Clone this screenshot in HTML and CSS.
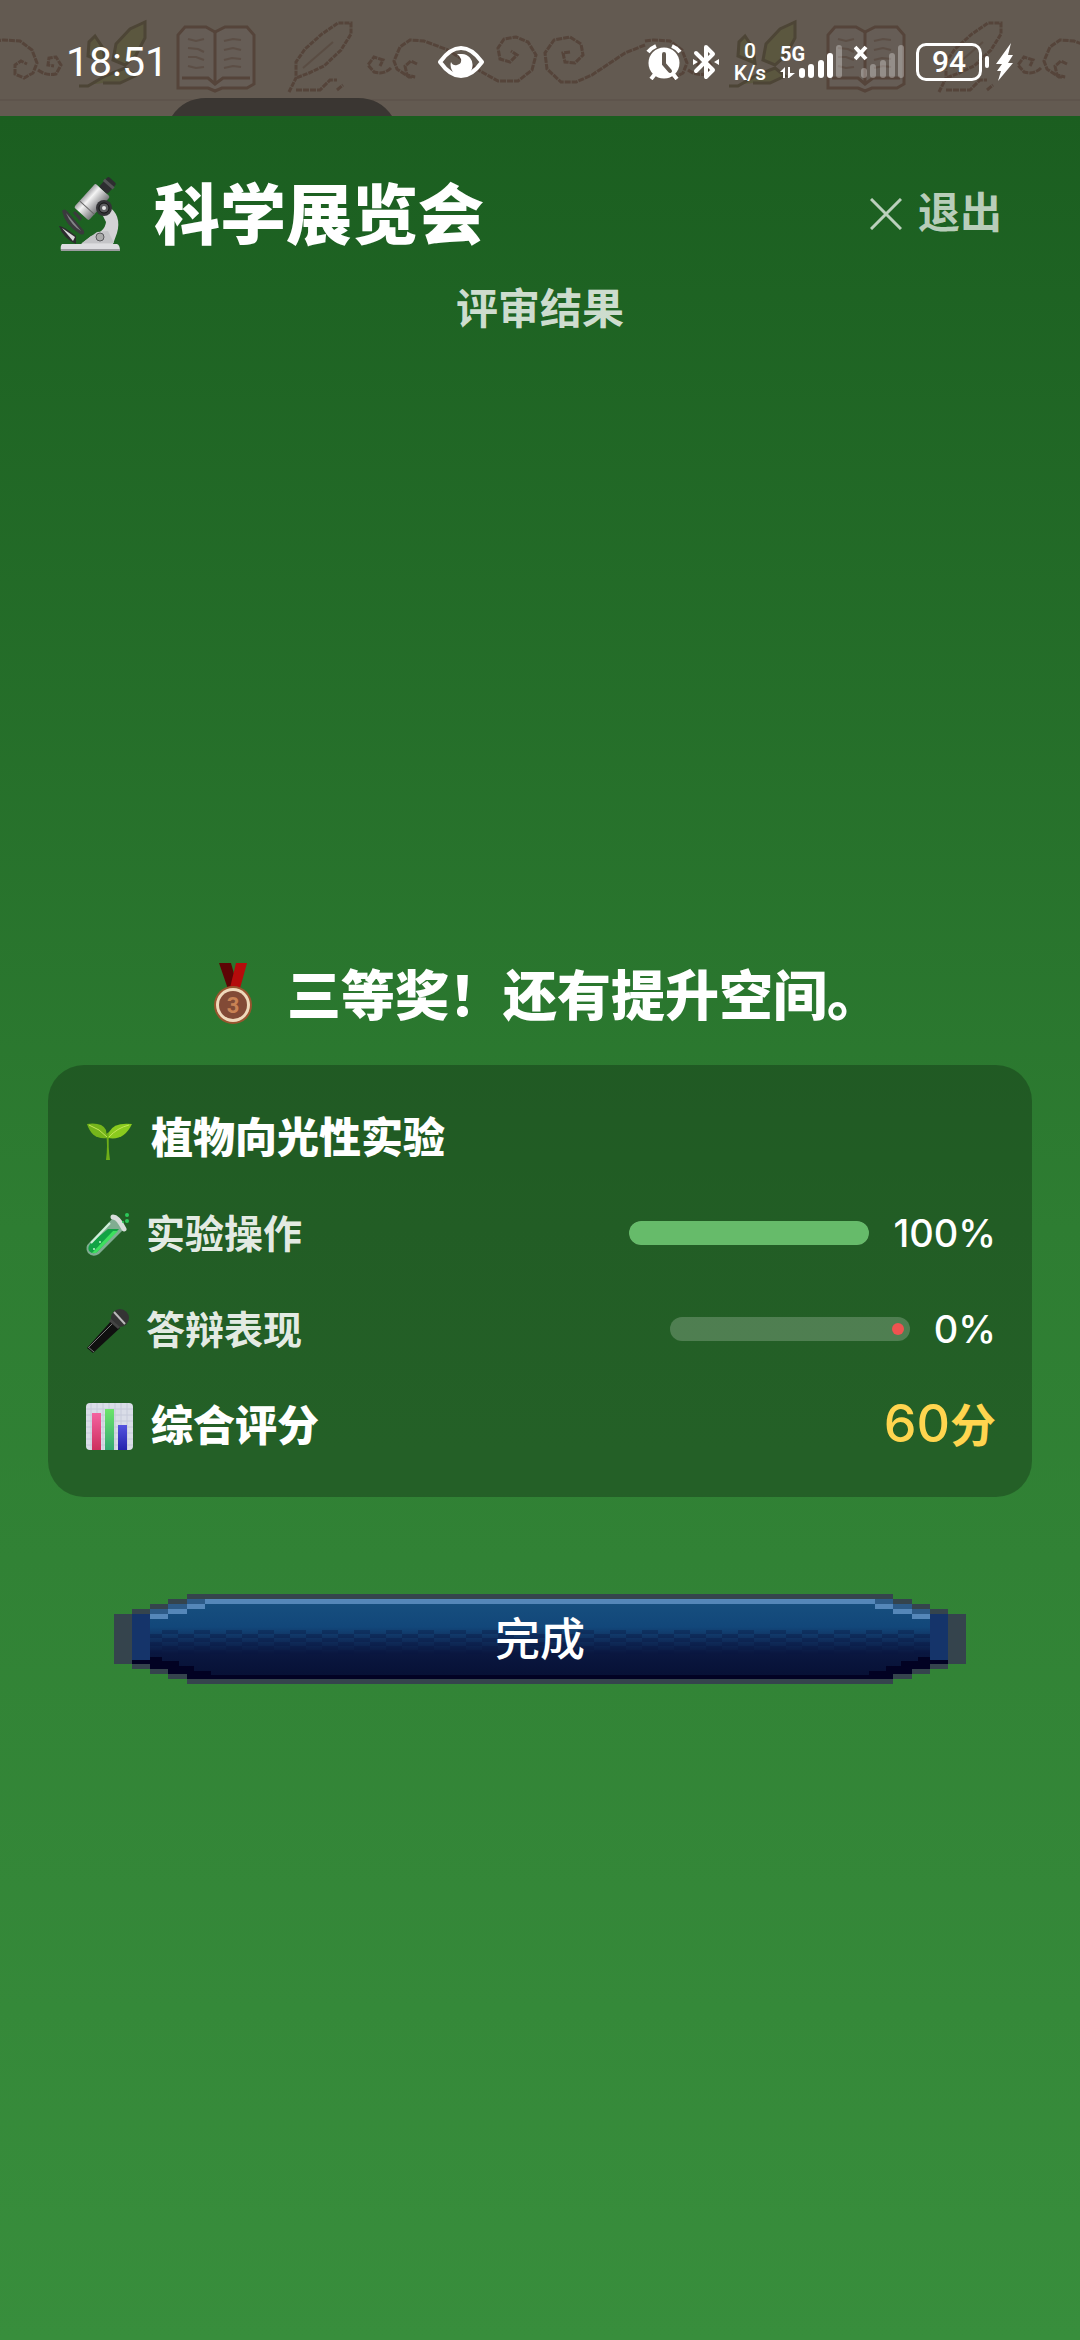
FILE: index.html
```html
<!DOCTYPE html>
<html lang="zh-CN">
<head>
  <meta charset="UTF-8" />
  <meta name="viewport" content="width=device-width, initial-scale=1" />
  <title>科学展览会</title>
  <link rel="stylesheet" href="styles.css">
</head>
<body>
  <div class="status-bar">
    <!-- Parchment border behind the status icons -->
    <svg class="parchment" width="1080" height="116" viewBox="0 0 1080 116" aria-hidden="true">
      <defs>
        <g id="motif" fill="none" stroke="#55443a" stroke-width="3">
          <!-- scroll left of the leaf -->
          <path d="M-5 41 L3 40 L20 41 L32 50 L37 63 L33 73 L24 78 L15 74 L15 65 L21 61 L27 64" stroke-dasharray="6 1" />
          <path d="M38 70 Q46 76 56 74 L61 65 L56 57 L49 58 L48 65 L54 66" stroke-dasharray="6 1" />
          <!-- leaf -->
          <g stroke="#4d4536" fill="#5b573f">
            <path d="M113 60 L116 44 L130 29 L145 22 V38 L136 55 L125 65 Z" />
            <path d="M88 56 L89 42 L95 36 L103 48 L105 63 Z" />
            <path d="M79 86 H88 L105 76 L125 68 L135 76 L120 83 H103" />
          </g>
          <!-- book -->
          <path d="M178 84 V35 L185 27 H206 L215 32 L225 27 H247 L254 35 V84 L247 88 H222 L215 91 L208 88 H178 Z" fill="#665d56" />
          <path d="M182 78 H208 L215 84 L223 78 H250 M215 32 V82" />
          <path d="M188 39 l8 2 8-2 M188 48 l10 1 6 3 M188 57 h8 l8 3 M188 66 l8 2 8-1 M224 41 l9-2 8 1 M224 50 l9-2 8 2 M224 60 l8-2 9 1 M224 68 l9-2 8 1" stroke-width="2" opacity=".6" />
          <!-- quill -->
          <path d="M289 92 L296 78 V62 L305 49 L322 34 L338 23 H351 V34 L341 50 L324 66 L309 73 L296 78" stroke-dasharray="5 1" />
          <path d="M303 68 L333 42" stroke-width="2" opacity=".6" />
          <path d="M296 90 H320 L330 80 H337 M337 90 L343 85" stroke-dasharray="6 1" />
          <!-- small curls and the large spiral -->
          <path d="M391 68 Q384 75 374 72 L368 65 L374 57 L383 60 L380 66" stroke-dasharray="6 1" />
          <path d="M417 64 L411 61 L405 66 L407 75 L415 77 L409 77 L397 69 L394 61 L400 47 L410 40 L424 41 L448 50 L480 71 L498 81 H518 L532 70 L536 55 L528 42 L516 37 L504 39 L498 48 L500 59 L510 62 L517 55 L511 51" stroke-dasharray="6 1" />
        </g>
      </defs>
      <rect x="0" y="99" width="1080" height="2" fill="#5e544c" />
      <use href="#motif" />
      <use href="#motif" x="650" />
      <path d="M645 45 L625 53 L592 75 L576 82 H561 L547 69 L545 53 L554 40 L570 37 L581 44 L583 55 L575 63 L565 62 L563 53 L570 52" fill="none" stroke="#55443a" stroke-width="3" stroke-dasharray="6 1" />
      <path d="M172 116 Q184 98 206 98 H358 Q380 98 392 116 Z" fill="#3a3632" />
    </svg>

    <div class="clock">18:51</div>
    <svg class="eye" width="46" height="32" viewBox="0 0 46 32" aria-hidden="true">
      <path d="M2 16 Q12 2 23 2 Q34 2 44 16 Q34 30 23 30 Q12 30 2 16 Z" fill="none" stroke="#fff" stroke-width="4" stroke-linejoin="round" />
      <path d="M24 8 A11 11 0 1 1 13 16 Q15 20 19 19 Q24 18 23 13 Q22 10 19 8 Z" fill="#fff" />
    </svg>

    <div class="status-icons">
      <svg width="36" height="36" viewBox="0 0 36 36" aria-hidden="true">
        <circle cx="18" cy="19" r="15.500" fill="#fff" />
        <path d="M2 8 Q5 4 10 2 M26 2 Q31 4 34 8" fill="none" stroke="#fff" stroke-width="4" />
        <path d="M9 30 L5 35 M27 30 L31 35" stroke="#fff" stroke-width="4" />
        <path d="M18 10 V20 L24 27" fill="none" stroke="#635a51" stroke-width="4" stroke-linecap="round" />
      </svg>
      <svg class="bluetooth" width="26" height="36" viewBox="0 0 26 36" aria-hidden="true">
        <path d="M3 9 L20 26 L13 33 V3 L20 10 L3 27" fill="none" stroke="#fff" stroke-width="4" stroke-linejoin="round" stroke-linecap="round" />
        <path d="M0 15 L5 18 L0 21 Z M26 15 L21 18 L26 21 Z" fill="#fff" />
      </svg>
      <div class="net-speed"><span>0</span><span>K/s</span></div>
      <div class="signal">
        <span class="signal-label">5G</span>
        <svg width="64" height="36" viewBox="0 0 64 36" fill="#fff" aria-hidden="true">
          <path d="M0 28 L5 23 V34 H3 V28 Z M8 23 H10 V29 L15 29 L9 34 H8 Z" />
          <rect x="19" y="24" width="6" height="10" rx="3" />
          <rect x="28" y="20" width="6" height="14" rx="3" />
          <rect x="38" y="16" width="6" height="18" rx="3" />
          <rect x="47" y="9" width="6" height="25" rx="3" />
          <rect x="56" y="1" width="6" height="33" rx="3" opacity=".3" />
        </svg>
      </div>
      <svg class="no-sim" width="50" height="36" viewBox="0 0 50 36" aria-hidden="true">
        <path d="M1 3 L12 15 M12 3 L1 15" stroke="#fff" stroke-width="4" />
        <g fill="#fff" opacity=".3">
          <rect x="7" y="24" width="6" height="10" rx="3" />
          <rect x="16" y="20" width="6" height="14" rx="3" />
          <rect x="26" y="16" width="6" height="18" rx="3" />
          <rect x="35" y="9" width="6" height="25" rx="3" />
          <rect x="44" y="1" width="6" height="33" rx="3" />
        </g>
      </svg>
      <div class="battery">94</div>
      <svg class="bolt" width="18" height="38" viewBox="0 0 18 38" aria-hidden="true">
        <path d="M15 0 L0 21 H6 L1 28 H5 L2 38 L17 20 H12 L17 12 H12 Z" fill="#fff" />
      </svg>
    </div>
  </div>

  <div class="screen">
    <header class="header">
      <h1>
        <svg class="title-icon" viewBox="0 0 66 76" aria-hidden="true">
          <defs>
            <linearGradient id="metal" x1="0" y1="0" x2="1" y2="0">
              <stop offset="0" stop-color="#a2a2a5" />
              <stop offset=".3" stop-color="#f4f4f4" />
              <stop offset="1" stop-color="#77777a" />
            </linearGradient>
          </defs>
          <path d="M50 29 Q64 38 59 56 L55 67 H23 L33 59 Q47 55 48 45 L43 35 Z" fill="#d3d3d5" />
          <path d="M24 66 L39 55 L50 54 L56 66 Z" fill="#c4c4c7" />
          <circle cx="42" cy="60" r="4" fill="#aaa" stroke="#59595c" stroke-width="1" />
          <path d="M4 67 H59 Q62 68 62 74 H3 Q2 69 4 67 Z" fill="#dddde0" />
          <path d="M3 72 H62 V74 H3 Z" fill="#9c9ca0" />
          <path d="M4 34 Q6 31 9 34 L26 54 Q27 59 22 57 Q7 48 4 34 Z" fill="#3a3a3d" />
          <path d="M8 36 L23 54 Q13 48 8 36 Z" fill="#858589" />
          <path d="M1 49 Q4 48 18 59 L18 67 Q5 61 1 49 Z" fill="#2c2c2e" />
          <path d="M4 51 L17 60 L15 64 Z" fill="#d8d8da" />
          <path d="M17 34 L24 41 L22 44 L15 36 Z" fill="#3b3b3d" />
          <g transform="rotate(42 34 25)">
            <rect x="24" y="9" width="20" height="32" rx="2" fill="url(#metal)" />
            <rect x="24" y="32" width="20" height="1" fill="#666" />
            <rect x="29" y="-5" width="11" height="14" rx="2" fill="#2d2d30" />
            <rect x="28" y="-1" width="13" height="3" fill="#555558" />
          </g>
          <circle cx="46" cy="31" r="8" fill="#343437" />
          <circle cx="46" cy="31" r="5" fill="#5e5e61" stroke="#111" stroke-width="1" />
          <circle cx="46" cy="31" r="2" fill="#e8e8e8" />
        </svg>
        科学展览会
      </h1>
      <button class="exit" type="button">
        <svg width="32" height="32" viewBox="0 0 32 32" aria-hidden="true">
          <path d="M1 1 L31 31 M31 1 L1 31" stroke="currentColor" stroke-width="3" />
        </svg>
        退出
      </button>
    </header>
    <p class="subtitle">评审结果</p>

    <main class="result">
      <h2 class="award">
        <svg class="medal" viewBox="0 0 68 68" aria-hidden="true">
          <path d="M20 2 H32 L40 31 H30 Z" fill="#5d0505" />
          <path d="M37 2 H48 L40 31 H30 Z" fill="#b50b0b" />
          <path d="M27 27 H41 L43 32 H25 Z" fill="#b77843" />
          <circle cx="34" cy="44" r="19" fill="#98552f" />
          <circle cx="34" cy="44" r="17" fill="#efd9bb" />
          <circle cx="34" cy="44" r="14" fill="#824a36" />
          <text class="medal-number" x="34" y="52" text-anchor="middle">3</text>
        </svg>
        三等奖！还有提升空间。
      </h2>

      <section class="card">
        <div class="row row-strong">
          <span class="label">
            <svg viewBox="0 0 47 47" aria-hidden="true">
              <path d="M20 45 Q22 30 20 19 L23 17 Q22 32 24 45 Z" fill="#6fae18" />
              <path d="M1 9 Q16 7 20 15 L21 23 Q6 25 1 9 Z" fill="#75b51b" />
              <path d="M46 9 Q28 7 23 17 L22 23 Q38 26 46 9 Z" fill="#8acb1e" />
              <path d="M3 10 Q14 14 21 22 M43 10 Q31 13 23 22" fill="none" stroke="#c4e658" stroke-width="1" />
            </svg>
            植物向光性实验
          </span>
        </div>

        <div class="row">
          <span class="label" id="operation">
            <svg viewBox="0 0 44 44" aria-hidden="true">
              <path d="M27 5 L38 16 L13 41 Q7 45 2 40 Q-2 34 4 29 Z" fill="#80ad91" />
              <path d="M22 16 H33 L11 39 Q7 42 3 38 Q1 34 5 30 Z" fill="#12a345" />
              <path d="M32 18 L10 40 L6 40 L27 18 Z" fill="#3de05e" />
              <path d="M27 4 Q32 4 38 16" fill="none" stroke="#d8dedb" stroke-width="5" stroke-linecap="round" />
              <path d="M24 10 L5 30" stroke="#d2f0da" stroke-width="2" />
              <circle cx="41" cy="2" r="2" fill="#2cc95a" />
              <circle cx="41" cy="8" r="2" fill="#2cc95a" />
              <circle cx="37" cy="9" r="1" fill="#2cc95a" />
              <circle cx="14" cy="29" r="1" fill="#bdf5c9" />
              <circle cx="8" cy="36" r="1" fill="#bdf5c9" />
            </svg>
            实验操作
          </span>
          <div class="score">
            <div class="bar" role="progressbar" aria-labelledby="operation" aria-valuenow="100">
              <div class="bar-fill" style="width: 100%"></div>
            </div>
            <span>100%</span>
          </div>
        </div>

        <div class="row">
          <span class="label" id="defense">
            <svg viewBox="0 0 44 44" aria-hidden="true">
              <path d="M26 11 L34 19 L7 44 L1 39 Z" fill="#101010" />
              <path d="M27 14 L3 38" stroke="#777" stroke-width="1" />
              <circle cx="34" cy="9" r="9" fill="#343434" />
              <path d="M28 3 L39 15" stroke="#bbb" stroke-width="2" />
              <path d="M24 11 L33 19" stroke="#444" stroke-width="3" />
              <path d="M2 38 L8 43" stroke="#777" stroke-width="1" />
            </svg>
            答辩表现
          </span>
          <div class="score">
            <div class="bar bar-empty" role="progressbar" aria-labelledby="defense" aria-valuenow="0"></div>
            <span>0%</span>
          </div>
        </div>

        <div class="row row-strong">
          <span class="label">
            <svg viewBox="0 0 47 47" aria-hidden="true">
              <defs>
                <linearGradient id="pink" x2="0" y2="1"><stop stop-color="#f463a0" /><stop offset="1" stop-color="#cd2e5d" /></linearGradient>
                <linearGradient id="green" x2="0" y2="1"><stop stop-color="#6de56b" /><stop offset="1" stop-color="#34a873" /></linearGradient>
                <linearGradient id="blue" x2="0" y2="1"><stop stop-color="#5553df" /><stop offset="1" stop-color="#2423ad" /></linearGradient>
              </defs>
              <rect width="47" height="47" rx="4" fill="#dadde8" />
              <path d="M0 6 H47 M0 12 H47 M0 18 H47 M0 24 H47 M0 30 H47 M0 36 H47 M0 42 H47 M5 0 V47 M11 0 V47 M17 0 V47 M23 0 V47 M29 0 V47 M35 0 V47 M41 0 V47" stroke="#c6cada" stroke-width="1" />
              <rect x="6" y="10" width="9" height="37" fill="url(#pink)" />
              <rect x="19" y="6" width="9" height="41" fill="url(#green)" />
              <rect x="32" y="22" width="9" height="25" fill="url(#blue)" />
            </svg>
            综合评分
          </span>
          <span class="total"><span class="total-number">60</span>分</span>
        </div>
      </section>

      <button class="done" type="button">
        <svg class="done-frame" viewBox="0 0 852 90" preserveAspectRatio="none" shape-rendering="crispEdges" aria-hidden="true">
          <defs>
            <linearGradient id="navy" x2="0" y2="1">
              <stop offset="0" stop-color="#17507f" />
              <stop offset=".35" stop-color="#12477a" />
              <stop offset=".5" stop-color="#10305f" />
              <stop offset=".68" stop-color="#0a1740" />
              <stop offset="1" stop-color="#071034" />
            </linearGradient>
            <pattern id="dither" width="32" height="8" patternUnits="userSpaceOnUse">
              <rect width="16" height="4" fill="#081540" />
              <rect x="16" y="4" width="16" height="4" fill="#081540" />
            </pattern>
          </defs>
          <path d="M0 20 H18 V15 H36 V10 H54 V5 H73 V0 H779 V5 H798 V10 H816 V15 H834 V20 H852 V70 H834 V75 H816 V80 H798 V85 H779 V90 H73 V85 H54 V80 H36 V75 H18 V70 H0 Z" fill="#35444d" />
          <path d="M18 20 H36 V70 H18 Z M816 20 H834 V70 H816 Z" fill="#15346a" />
          <path d="M36 15 H54 V10 H73 V5 H779 V10 H798 V15 H816 V75 H798 V80 H779 V85 H73 V80 H54 V75 H36 Z" fill="url(#navy)" />
          <path d="M36 36 H816 V60 H36 Z" fill="url(#dither)" opacity=".35" />
          <path d="M91 5 H761 V10 H91 Z M73 10 H91 V15 H73 Z M54 15 H73 V20 H54 Z M36 20 H54 V25 H36 Z M761 10 H779 V15 H761 Z M779 15 H798 V20 H779 Z M798 20 H816 V25 H798 Z" fill="#5587b9" />
          <path d="M73 5 H91 V10 H73 Z M54 10 H73 V15 H54 Z M36 15 H54 V20 H36 Z M761 5 H779 V10 H761 Z M779 10 H798 V15 H779 Z M798 15 H816 V20 H798 Z" fill="#2d5b88" />
          <path d="M18 66 H36 V63 H48 V67 H65 V72 H80 V77 H97 V81 H755 V77 H772 V72 H787 V67 H804 V63 H816 V66 H834 V70 H816 V75 H798 V80 H779 V85 H73 V80 H54 V75 H36 V70 H18 Z" fill="#020223" />
        </svg>
        <span>完成</span>
      </button>
    </main>
  </div>
</body>
</html>
```

FILE: styles.css
```css
* {
  box-sizing: border-box;
}
body {
  margin: 0;
  min-height: 100vh;
  display: flex;
  flex-direction: column;
  font-family: "Noto Sans CJK SC", sans-serif;
  color: #fff;
  background: #388e3c;
}
h1, h2, p {
  margin: 0;
}
svg {
  display: block;
  flex: none;
}
button {
  border: none;
  padding: 0;
  background: none;
  font-family: inherit;
  cursor: pointer;
}

/* status bar */
.status-bar {
  position: relative;
  height: 116px;
  padding: 8px 66px 0;
  display: flex;
  align-items: center;
  overflow: hidden;
  background: #635a51;
  font-family: Roboto, sans-serif;
}
.parchment {
  position: absolute;
  left: 0;
  top: 0;
}
.clock, .eye, .status-icons {
  position: relative;
}
.clock {
  font-size: 41px;
  line-height: 48px;
}
.eye {
  margin-left: auto;
  margin-right: 162px;
}
.status-icons {
  display: flex;
  align-items: center;
}
.bluetooth {
  margin-left: 11px;
}
.net-speed {
  width: 36px;
  margin-left: 13px;
  display: flex;
  flex-direction: column;
  align-items: center;
  font-size: 21px;
  line-height: 22px;
  font-weight: 500;
}
.signal {
  position: relative;
  margin-left: 12px;
}
.signal-label {
  position: absolute;
  left: 0;
  top: 0;
  font-size: 20px;
  line-height: 20px;
  font-weight: 700;
}
.no-sim {
  margin-left: 10px;
}
.battery {
  position: relative;
  width: 66px;
  height: 38px;
  margin-left: 12px;
  border: 3px solid #fff;
  border-radius: 10px;
  font-size: 30px;
  line-height: 32px;
  font-weight: 500;
  text-align: center;
}
.battery::after {
  content: "";
  position: absolute;
  right: -10px;
  top: 10px;
  width: 4px;
  height: 12px;
  border-radius: 2px;
  background: #fff;
}
.bolt {
  margin-left: 14px;
}

/* screen */
.screen {
  flex: 1;
  display: flex;
  flex-direction: column;
  padding: 48px 48px 32px;
  background: linear-gradient(#1b5e20, #2e7d32 50%, #388e3c);
}
.header {
  display: flex;
  justify-content: space-between;
  align-items: center;
  padding: 0 30px 4px 10px;
}
.header h1 {
  display: flex;
  align-items: center;
  gap: 30px;
  font-size: 66px;
  line-height: 92px;
  font-weight: 900;
}
.title-icon {
  width: 66px;
  height: 76px;
  margin-top: 10px;
}
.exit {
  display: flex;
  align-items: center;
  gap: 16px;
  color: rgba(255, 255, 255, 0.7);
  font-size: 42px;
  line-height: 48px;
  font-weight: 700;
}
.exit svg {
  margin-top: 8px;
}
.subtitle {
  margin-top: 22px;
  padding-bottom: 2px;
  text-align: center;
  color: rgba(255, 255, 255, 0.8);
  font-size: 42px;
  line-height: 48px;
  font-weight: 700;
}

.result {
  flex: 1;
  display: flex;
  flex-direction: column;
  justify-content: center;
}
.award {
  display: flex;
  justify-content: center;
  align-items: center;
  gap: 20px;
  padding-bottom: 4px;
  font-size: 54px;
  line-height: 68px;
  font-weight: 900;
}
.medal {
  width: 68px;
  height: 68px;
  margin-top: 4px;
}
.medal-number {
  font-family: Roboto, sans-serif;
  font-size: 22px;
  font-weight: 700;
  fill: #c98254;
}

.card {
  margin-top: 32px;
  padding: 24px 36px;
  border-radius: 36px;
  background: rgba(0, 0, 0, 0.25);
}
.row {
  height: 96px;
  display: flex;
  justify-content: space-between;
  align-items: center;
  font-size: 39px;
  line-height: 48px;
  font-weight: 700;
}
.label {
  display: flex;
  align-items: center;
  gap: 16px;
  padding-left: 2px;
  padding-bottom: 4px;
  color: rgba(255, 255, 255, 0.9);
}
.label svg {
  width: 44px;
  height: 44px;
  margin-top: 8px;
  overflow: visible;
}
.row-strong {
  font-size: 42px;
  font-weight: 900;
}
.row-strong .label {
  gap: 18px;
  color: #fff;
}
.row-strong svg {
  width: 47px;
  height: 47px;
}
.score {
  display: flex;
  align-items: center;
  gap: 24px;
  font-family: Inter, sans-serif;
  font-size: 38px;
  font-weight: 500;
}
.bar {
  position: relative;
  width: 240px;
  height: 24px;
  border-radius: 12px;
  overflow: hidden;
  background: rgba(255, 255, 255, 0.2);
}
.bar-fill {
  height: 100%;
  border-radius: 12px;
  background: #66bb6a;
}
.bar-empty::after {
  content: "";
  position: absolute;
  right: 6px;
  top: 6px;
  width: 12px;
  height: 12px;
  border-radius: 50%;
  background: #ef5350;
}
.total {
  padding-bottom: 4px;
  color: #ffd54f;
  font-size: 46px;
  font-weight: 700;
}
.total-number {
  font-family: Inter, sans-serif;
  font-size: 52px;
  font-weight: 500;
}

.done {
  position: relative;
  height: 90px;
  margin: 97px 66px 0;
  padding-bottom: 4px;
  color: #fff;
  font-size: 45px;
  line-height: 48px;
  font-weight: 500;
}
.done-frame {
  position: absolute;
  left: 0;
  top: 0;
  width: 100%;
  height: 100%;
}
.done span {
  position: relative;
}
```
